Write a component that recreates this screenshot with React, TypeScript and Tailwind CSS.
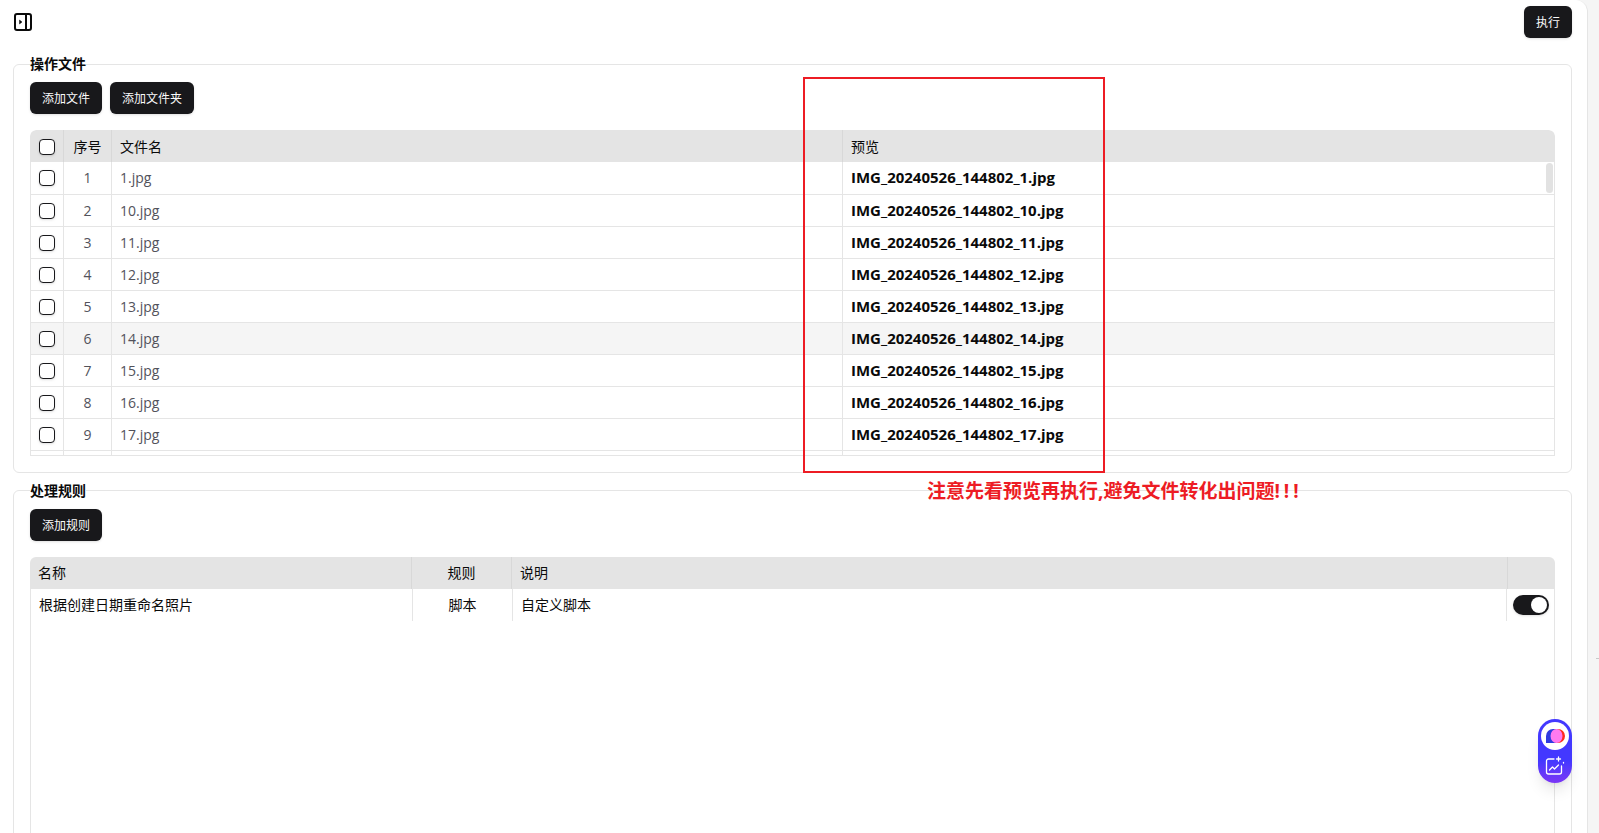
const files = [
  ['1.jpg', 'IMG_20240526_144802_1.jpg'],
  ['10.jpg', 'IMG_20240526_144802_10.jpg'],
  ['11.jpg', 'IMG_20240526_144802_11.jpg'],
  ['12.jpg', 'IMG_20240526_144802_12.jpg'],
  ['13.jpg', 'IMG_20240526_144802_13.jpg'],
  ['14.jpg', 'IMG_20240526_144802_14.jpg'],
  ['15.jpg', 'IMG_20240526_144802_15.jpg'],
  ['16.jpg', 'IMG_20240526_144802_16.jpg'],
  ['17.jpg', 'IMG_20240526_144802_17.jpg'],
];

function Btn({ label }: { label: string }) {
  return (
    <button className="h-8 px-3 pt-px rounded-md bg-[#18181b] text-[#fafafa] text-xs shadow">{label}</button>
  );
}

function Check() {
  return <span className="block w-4 h-4 rounded border border-[#18181b] bg-white shadow-sm" />;
}

function Section({ title, className, legendClass, children }: { title: string; className?: string; legendClass?: string; children: React.ReactNode }) {
  return (
    <fieldset className={`w-[1559px] border border-[#e5e5e5] rounded-md px-4 ${className ?? ''}`}>
      <legend className={`text-sm font-bold leading-[22px] text-[#0a0a0a] ${legendClass ?? ''}`}>{title}</legend>
      {children}
    </fieldset>
  );
}

export default function App() {
  return (
    <div className="relative h-[833px] overflow-hidden bg-[#f5f5f5] font-['Open_Sans','Noto_Sans_CJK_SC',sans-serif]">
      <div className="relative h-full w-[1588px] overflow-hidden bg-white border-r border-[#e5e5e5] rounded-tr-xl px-[13px]">
        <div className="flex items-start justify-between h-[53px] pt-[6px] pr-[2px]">
          <svg className="mt-[7px] ml-px" width="18" height="18" viewBox="0 0 18 18" fill="none" stroke="#0a0a0a" strokeWidth="2">
            <rect x="1" y="1" width="16" height="16" rx="2" />
            <path d="M12 1v16" />
            <path d="M5.5 7v4l2.5-2z" fill="#0a0a0a" strokeWidth="0.5" />
          </svg>
          <Btn label="执行" />
        </div>

        <Section title="操作文件" className="h-[420px]">
          <div className="flex gap-2 pt-[7px]">
            <Btn label="添加文件" />
            <Btn label="添加文件夹" />
          </div>
          <div className="mt-4 w-[1525px] h-[326px] overflow-hidden rounded-t-md border-b border-[#e5e5e5] text-sm">
            <div className="flex h-8 items-center bg-[#e4e4e4] text-[#0a0a0a] rounded-t-md">
              <div className="w-[34px] h-full flex items-center justify-center pt-px border-r border-[#d8d8d8]"><Check /></div>
              <div className="w-[48px] h-full flex items-center justify-center pt-px border-r border-[#d8d8d8]">序号</div>
              <div className="w-[731px] h-full flex items-center px-2 pt-px border-r border-[#d8d8d8]">文件名</div>
              <div className="flex-1 px-2 pt-px">预览</div>
            </div>
            <div className="relative border-x border-[#e5e5e5]">
              <span className="absolute right-[1px] top-px w-[7px] h-[30px] rounded bg-[#e2e2e2]" />
              {files.map(([name, preview], i) => (
                <div key={name} className={`flex items-center border-b border-[#e5e5e5] ${i === 0 ? 'h-[33px]' : 'h-8'} ${i === 5 ? 'bg-[#f5f5f5]' : ''}`}>
                  <div className="w-[33px] h-full flex items-center justify-center border-r border-[#e5e5e5]"><Check /></div>
                  <div className="w-[48px] h-full flex items-center justify-center border-r border-[#e5e5e5] text-[#52525b]">{i + 1}</div>
                  <div className="w-[731px] h-full flex items-center px-2 border-r border-[#e5e5e5] text-[#52525b]">{name}</div>
                  <div className="flex-1 px-2 text-[15px] font-bold text-[#0a0a0a]">{preview}</div>
                </div>
              ))}
              <div className="flex h-8">
                <div className="w-[33px] border-r border-[#e5e5e5]" />
                <div className="w-[48px] border-r border-[#e5e5e5]" />
                <div className="w-[731px] border-r border-[#e5e5e5]" />
              </div>
            </div>
          </div>
        </Section>

        <Section title="处理规则" className="mt-[6px] h-[400px]" legendClass="pt-px">
          <div className="pt-[7px]">
            <Btn label="添加规则" />
          </div>
          <div className="mt-4 w-[1525px] text-sm text-[#0a0a0a]">
            <div className="flex h-8 items-center bg-[#e4e4e4] rounded-t-md">
              <div className="w-[382px] h-full flex items-center px-2 border-r border-[#d8d8d8]">名称</div>
              <div className="w-[100px] h-full flex items-center justify-center border-r border-[#d8d8d8]">规则</div>
              <div className="flex-1 h-full flex items-center px-2 border-r border-[#d8d8d8]">说明</div>
              <div className="w-[47px]" />
            </div>
            <div className="h-[300px] border-x border-[#e5e5e5]">
              <div className="flex h-8 items-center">
                <div className="w-[382px] h-full flex items-center px-2 border-r border-[#e5e5e5]">根据创建日期重命名照片</div>
                <div className="w-[100px] h-full flex items-center justify-center border-r border-[#e5e5e5]">脚本</div>
                <div className="flex-1 h-full flex items-center px-2 border-r border-[#e5e5e5]">自定义脚本</div>
                <div className="w-[47px] flex justify-center">
                  <span className="flex items-center justify-end w-9 h-5 rounded-full bg-[#18181b] px-0.5 shadow">
                    <span className="block w-4 h-4 rounded-full bg-white" />
                  </span>
                </div>
              </div>
            </div>
          </div>
        </Section>

        {/* annotation drawn over the screenshot */}
        <div className="absolute left-[803px] top-[77px] w-[302px] h-[396px] border-2 border-[#ed1c24]" />
        <div className="absolute left-[927px] top-[477px] text-[19px] leading-7 font-bold text-[#ed1c24] whitespace-nowrap">
          注意先看预览再执行,避免文件转化出问题<span className="tracking-[4px]">!!!</span>
        </div>

        {/* floating widget */}
        <div className="absolute left-[1538px] top-[719px] w-[34px] h-16 rounded-full bg-gradient-to-b from-[#4338ff] from-65% to-[#7a35f5] flex flex-col items-center pt-[3px] shadow-lg">
          <span className="flex items-center justify-center w-7 h-7 rounded-full bg-white">
            <svg width="19" height="14" viewBox="0 0 19 14">
              <path d="M0 14V7a7 7 0 0 1 7-7h5v14z" fill="#2f3be0" />
              <circle cx="12" cy="7" r="7" fill="#ff2a1f" />
              <ellipse cx="10.5" cy="7" rx="6" ry="7" fill="#ff7af0" />
            </svg>
          </span>
          <svg className="mt-[6px]" width="20" height="20" viewBox="0 0 20 20" fill="none" stroke="white" strokeWidth="1.3" strokeLinecap="round" strokeLinejoin="round">
            <path d="M9 3H3.5a2 2 0 0 0-2 2v11a2 2 0 0 0 2 2h11a2 2 0 0 0 2-2v-6" />
            <path d="M4.5 14l3-3 2 2 4-4" />
            <path d="M13.5 1v4M11.5 3h4" />
            <path d="M18.5 6.5v.5" />
          </svg>
        </div>
      </div>
      <span className="absolute left-[1596px] top-[658px] w-[3px] h-px bg-[#c8c8c8]" />
    </div>
  );
}
